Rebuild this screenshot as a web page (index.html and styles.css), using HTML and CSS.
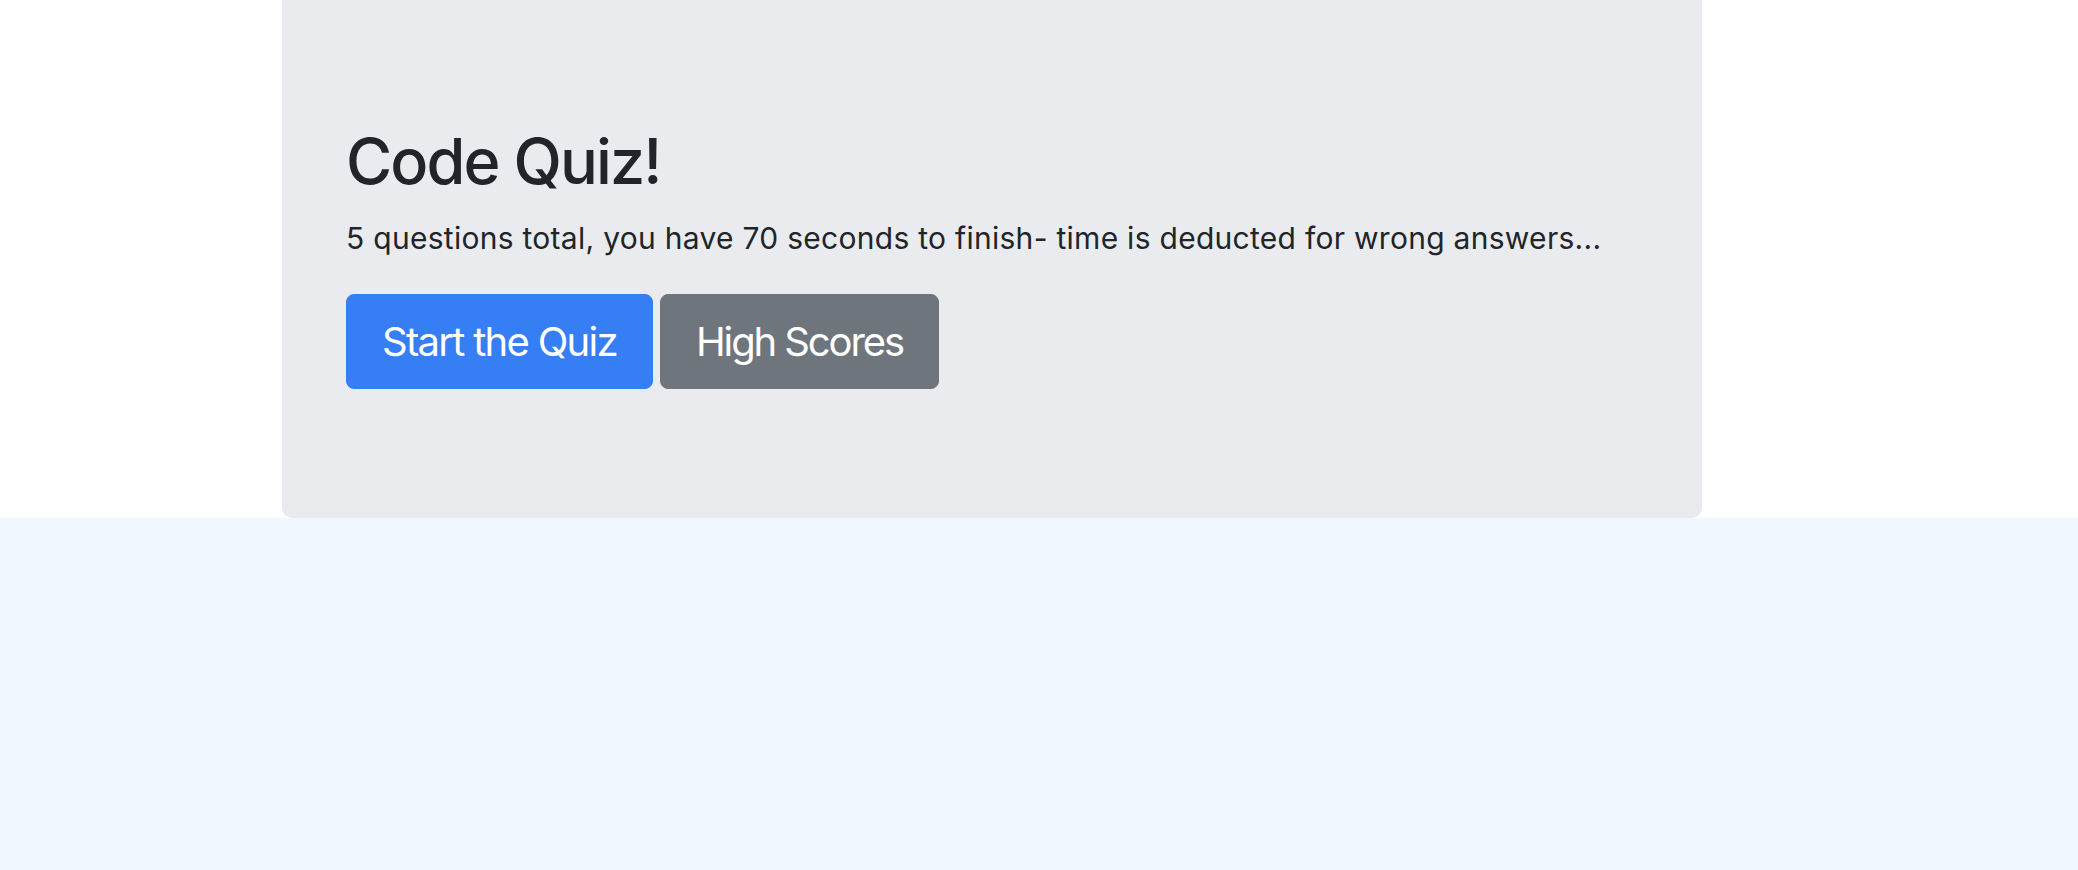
FILE: index.html
```html
<!DOCTYPE html>
<html lang="en">
<head>
<meta charset="utf-8">
<title>Code Quiz</title>
<link rel="stylesheet" href="styles.css">
</head>
<body>
<header class="top">
  <div class="jumbotron">
    <h1 class="title">Code Quiz!</h1>
    <p class="lead">5 questions total, you have 70 seconds to finish- time is deducted for wrong answers...</p>
    <div class="actions">
      <button class="btn btn-primary">Start the Quiz</button>
      <button class="btn btn-secondary">High Scores</button>
    </div>
  </div>
</header>
<main class="bottom"></main>
</body>
</html>
```

FILE: styles.css
```css
html, body {
  margin: 0;
  padding: 0;
}
body {
  font-family: Inter, "Noto Sans", "Liberation Sans", sans-serif;
  color: #212529;
  background: #f0f7fe;
  height: 870px;
  display: flex;
  flex-direction: column;
}
.top {
  background: #ffffff;
  display: flex;
}
.jumbotron {
  margin-left: 282px;
  width: 1420px;
  box-sizing: border-box;
  background: #e9ebef;
  border-radius: 0 0 10px 10px;
  padding: 123px 64px 129px;
}
.title {
  margin: 0;
  font-size: 63px;
  font-weight: 550;
  letter-spacing: -1.9px;
  line-height: 76px;
  color: #212529;
}
.lead {
  margin: 17px 0 33px;
  font-size: 30px;
  line-height: 45px;
  font-weight: 400;
  letter-spacing: 0.28px;
}
.actions {
  display: flex;
  gap: 7px;
}
.btn {
  font-family: inherit;
  font-size: 40px;
  line-height: 59px;
  padding: 17px 35px;
  border: 1px solid transparent;
  border-radius: 8px;
  color: #ffffff;
  letter-spacing: -1.7px;
  cursor: pointer;
}
.btn-primary {
  background: #367ef4;
  border-color: #367ef4;
}
.btn-secondary {
  background: #6f757c;
  border-color: #6f757c;
  letter-spacing: -2.1px;
}
.bottom {
  flex: 1;
  background: #f0f7fe;
}
```
